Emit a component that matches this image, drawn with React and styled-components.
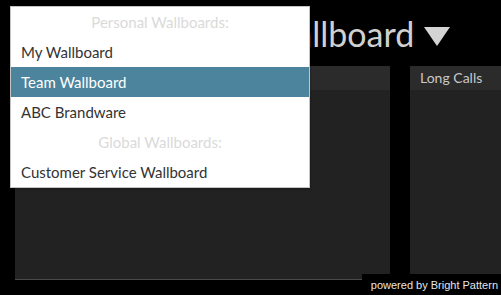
import React from 'react'
import styled, { createGlobalStyle } from 'styled-components'

const GlobalStyle = createGlobalStyle`
  html, body {
    margin: 0;
    padding: 0;
    background: #000;
    overflow: hidden;
  }
  body {
    font-family: Lato, "Open Sans", sans-serif;
  }
`

const personal = ['My Wallboard', 'Team Wallboard', 'ABC Brandware']
const global = ['Customer Service Wallboard']

export default function App() {
  const selected = 'Team Wallboard'
  return (
    <Page>
      <GlobalStyle />
      <TitleBar>
        <Title>Team Wallboard</Title>
        <Caret viewBox="0 0 26 19">
          <polygon points="0,0 26,0 13,19" fill="#d4d4d4" />
        </Caret>
      </TitleBar>
      <Panels>
        <Panel>
          <PanelHeader />
          <PanelBody />
        </Panel>
        <Panel>
          <PanelHeader>Long Calls</PanelHeader>
          <PanelBody />
        </Panel>
      </Panels>
      <Menu>
        <GroupLabel>Personal Wallboards:</GroupLabel>
        {personal.map((name) => (
          <MenuItem key={name} $active={name === selected}>
            {name}
          </MenuItem>
        ))}
        <GroupLabel>Global Wallboards:</GroupLabel>
        {global.map((name) => (
          <MenuItem key={name} $active={name === selected}>
            {name}
          </MenuItem>
        ))}
      </Menu>
      <Powered>powered by Bright Pattern</Powered>
    </Page>
  )
}

const Page = styled.div`
  position: relative;
  width: 501px;
  height: 295px;
  background: #000;
  overflow: hidden;
`

const TitleBar = styled.div`
  height: 66px;
  display: flex;
  align-items: center;
  gap: 10px;
  padding-left: 175px;
  padding-top: 2px;
  box-sizing: border-box;
`

const Title = styled.h1`
  margin: 0;
  font-family: Lato, sans-serif;
  font-weight: 400;
  font-size: 34px;
  color: #d0d0d0;
  line-height: 1;
  white-space: nowrap;
`

const Caret = styled.svg`
  flex: none;
  width: 26px;
  height: 19px;
  margin-top: 4px;
`

const Panels = styled.div`
  display: flex;
  gap: 20px;
  padding-left: 15px;
`

const Panel = styled.div`
  flex: 0 0 375px;
  height: 214px;
  display: flex;
  flex-direction: column;
  background: #222;
  border-bottom: 1px solid #4a4a4a;
  box-sizing: border-box;
`

const PanelHeader = styled.div`
  height: 24px;
  background: #2b2b2b;
  color: #c8c8c8;
  font-size: 14px;
  line-height: 24px;
  padding-left: 10px;
`

const PanelBody = styled.div`
  flex: 1;
`

const Menu = styled.div`
  position: absolute;
  left: 10px;
  top: 6px;
  width: 300px;
  box-sizing: border-box;
  background: #fff;
  border: 1px solid #c4c4c4;
  box-shadow: 0 1px 3px rgba(0, 0, 0, 0.3);
`

const GroupLabel = styled.div`
  height: 30px;
  line-height: 30px;
  text-align: center;
  color: #dadada;
  font-size: 15px;
`

const MenuItem = styled.div`
  height: 30px;
  line-height: 30px;
  padding-left: 10px;
  font-size: 15px;
  color: ${({ $active }) => ($active ? '#fff' : '#333')};
  background: ${({ $active }) => ($active ? '#4b849c' : 'transparent')};
`

const Powered = styled.div`
  position: absolute;
  right: 0;
  bottom: 0;
  padding: 4px 3px 2px 9px;
  background: #000;
  color: #e6e6e6;
  font-family: "Liberation Sans", Arial, sans-serif;
  font-size: 11px;
  line-height: 15px;
`
